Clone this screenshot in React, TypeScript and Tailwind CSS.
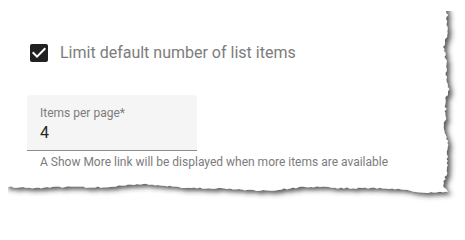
import * as React from "react";

// deterministic jitter so the torn edge is the same every render
function makeRandom(seed: number) {
  let s = seed;
  return () => {
    s = (s * 16807) % 2147483647;
    return (s - 1) / 2147483646;
  };
}

function tornPaperPath() {
  const rnd = makeRandom(7);
  const pts: string[] = ["M5,-20", "L445,-20"];
  for (let y = 13; y <= 190; y += 2) {
    const x = 446 + 1.4 * Math.sin(y / 11) + 0.8 * Math.sin(y / 4.3) + (rnd() - 0.5) * 2.6;
    pts.push(`L${x.toFixed(1)},${y}`);
  }
  pts.push("L448,192");
  for (let x = 446; x >= 8; x -= 3) {
    const y = 185.5 + (x / 448) * 4.5 + 1.8 * Math.sin(x / 31) + 0.8 * Math.sin(x / 13) + (rnd() - 0.5) * 1.4;
    pts.push(`L${x},${y.toFixed(1)}`);
  }
  pts.push("L5,186.5", "Z");
  return pts.join(" ");
}

function TornPaper() {
  const d = React.useMemo(tornPaperPath, []);
  return (
    <svg className="absolute inset-0" width={465} height={210} viewBox="0 0 465 210">
      <defs>
        <filter id="paper-shadow" x="-10%" y="-10%" width="120%" height="130%">
          <feDropShadow dx="3.5" dy="3" stdDeviation="2.4" floodColor="#333333" floodOpacity="0.8" />
        </filter>
        <clipPath id="paper-clip">
          <path d="M8,0 H438 V11 H465 V210 H8 Z" />
        </clipPath>
      </defs>
      <g clipPath="url(#paper-clip)">
        <path d={d} fill="#ffffff" filter="url(#paper-shadow)" />
      </g>
    </svg>
  );
}

function CheckedBox() {
  return (
    <svg width={24} height={24} viewBox="0 0 24 24" className="shrink-0">
      <path
        fill="#212121"
        d="M19 3H5c-1.11 0-2 .9-2 2v14c0 1.1.89 2 2 2h14c1.11 0 2-.9 2-2V5c0-1.1-.89-2-2-2zm-9 14l-5-5 1.41-1.41L10 14.17l7.59-7.59L19 8l-9 9z"
      />
    </svg>
  );
}

export default function App() {
  return (
    <div className="relative w-[465px] h-[210px] overflow-hidden bg-white font-['Roboto',sans-serif]">
      <TornPaper />
      <div className="relative flex flex-col pl-[27px] pt-[41px]">
        <label className="flex items-center gap-[9px]">
          <CheckedBox />
          <span className="text-[16px] leading-6 text-[#7c7c7c]">Limit default number of list items</span>
        </label>

        <div className="mt-[30px] w-[170px] h-[56px] bg-[#f5f5f5] border-b border-[#8c8c8c] rounded-t-[4px] px-[13px] pt-[11px]">
          <p className="text-[12px] leading-[14px] text-[#7c7c7c]">Items per page*</p>
          <p className="mt-[3px] text-[16px] leading-[20px] text-[#262626]">4</p>
        </div>
        <p className="mt-[3px] pl-[13px] text-[12px] leading-[16px] text-[#7c7c7c]">
          A Show More link will be displayed when more items are available
        </p>
      </div>
    </div>
  );
}
